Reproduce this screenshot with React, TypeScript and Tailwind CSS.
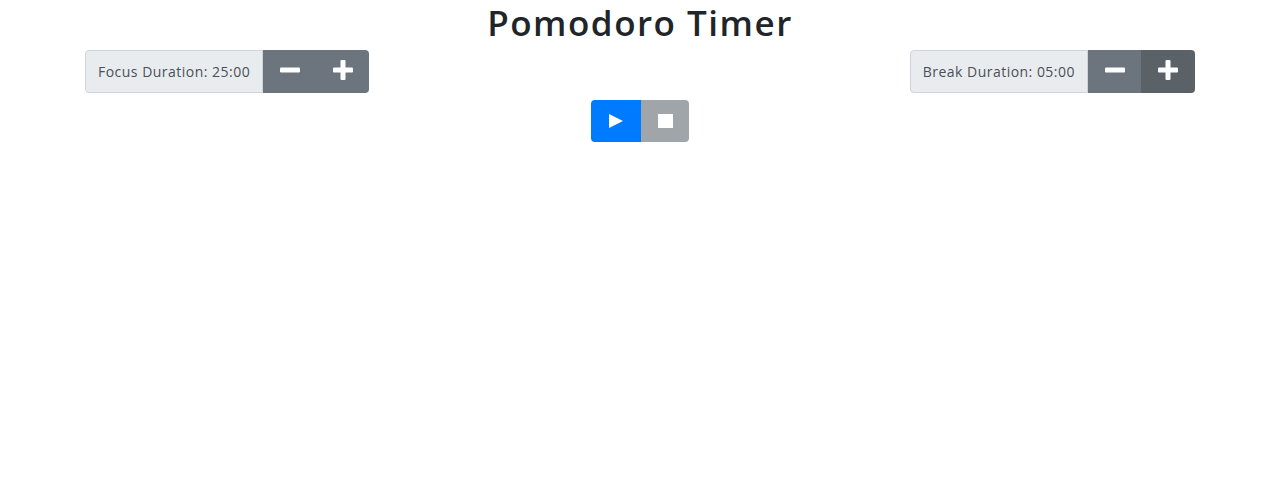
import React from "react";

const Minus = () => (
  <svg width="20" height="20" viewBox="0 0 20 20" aria-hidden="true" className="mb-[3px]">
    <rect x="0" y="7.5" width="20" height="5" rx="1" fill="#fff" />
  </svg>
);

const Plus = () => (
  <svg width="20" height="20" viewBox="0 0 20 20" aria-hidden="true" className="mb-[3px]">
    <rect x="0" y="7.5" width="20" height="5" rx="1" fill="#fff" />
    <rect x="7.5" y="0" width="5" height="20" rx="1" fill="#fff" />
  </svg>
);

function DurationGroup({ label, plusDark }: { label: string; plusDark?: boolean }) {
  return (
    <div className="flex h-[43px]">
      <div className="flex items-center rounded-l-[4px] border border-[#ced4da] bg-[#e9ecef] px-3 text-[14px] tracking-[0.48px] text-[#495057]">
        {label}
      </div>
      <button className="flex w-[53px] items-center justify-center bg-[#6c757d]">
        <Minus />
      </button>
      <button
        className={
          plusDark
            ? "flex w-[54px] items-center justify-center rounded-r-[4px] bg-[#5a6268]"
            : "flex w-[53px] items-center justify-center rounded-r-[4px] bg-[#6c757d]"
        }
      >
        <Plus />
      </button>
    </div>
  );
}

export default function App() {
  return (
    <div
      className="min-h-[493px] bg-white"
      style={{ fontFamily: '"Open Sans", "Noto Sans", sans-serif' }}
    >
      <div className="mx-auto w-[1110px]">
        <h2 className="text-center text-[35px] font-semibold leading-[46px] tracking-[1.5px] text-[#212529]">
          Pomodoro Timer
        </h2>
        <div className="mt-[4px] flex justify-between">
          <DurationGroup label="Focus Duration: 25:00" />
          <DurationGroup label="Break Duration: 05:00" plusDark />
        </div>
        <div className="mt-[7px] flex justify-center">
          <button className="flex h-[42px] w-[50px] items-center justify-center rounded-l-[4px] bg-[#007bff]">
            <svg width="14" height="14" viewBox="0 0 14 14" aria-hidden="true">
              <path d="M0 0 L14 7 L0 14 Z" fill="#fff" />
            </svg>
          </button>
          <button className="flex h-[42px] w-[48px] items-center justify-center rounded-r-[4px] bg-[#a0a5aa]">
            <span className="block h-[14px] w-[15px] bg-white" />
          </button>
        </div>
      </div>
    </div>
  );
}
